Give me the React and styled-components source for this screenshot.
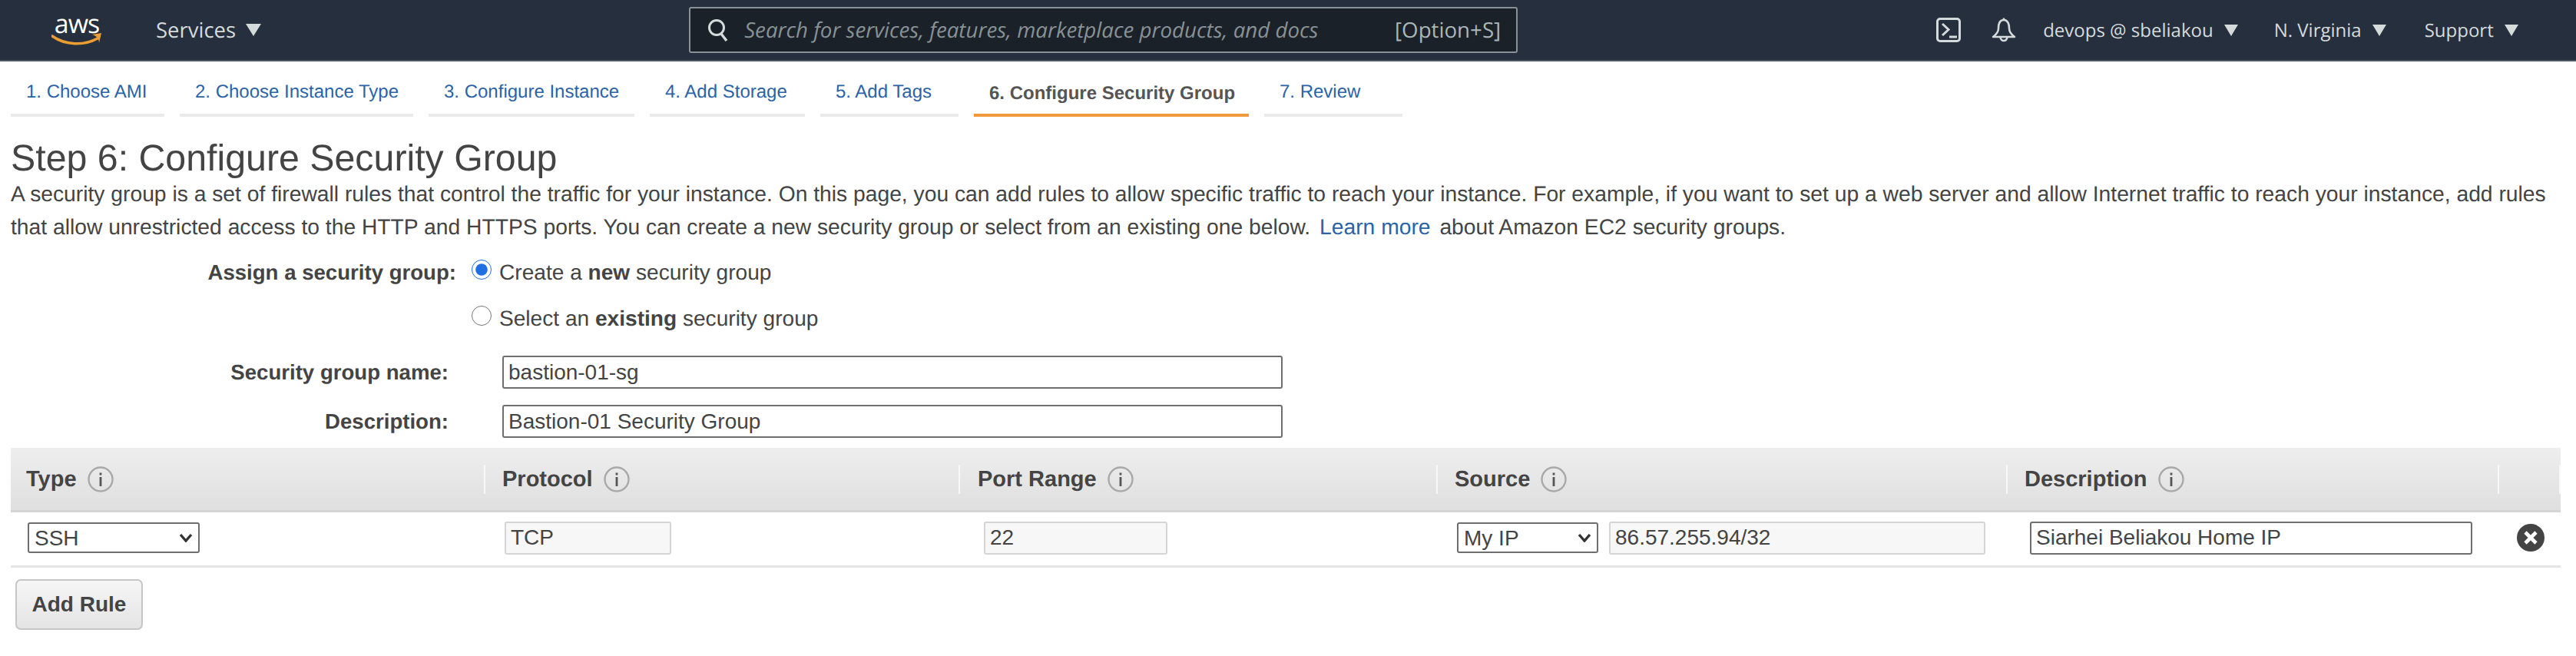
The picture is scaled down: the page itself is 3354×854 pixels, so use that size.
import React from 'react';
import styled, { createGlobalStyle } from 'styled-components';

const GlobalStyle = createGlobalStyle`
  html, body { margin: 0; padding: 0; background: #fff; }
  body { font-family: "Liberation Sans", Arial, sans-serif; color: #444; text-rendering: geometricPrecision; }
  * { box-sizing: border-box; }
`;

//top navigation
const NavBar = styled.header`
  height: 80px;
  background: #252f3e;
  border-bottom: 2px solid #4b545f;
  display: flex;
  align-items: center;
  font-family: "Open Sans", sans-serif;
  color: #d5dbdb;
  padding-left: 67px;
`;
const Logo = styled.div`
  width: 66px;
  height: 46px;
  display: flex;
  flex-direction: column;
  align-items: center;
`;
const LogoWord = styled.span`
  font-size: 34px;
  line-height: 28px;
  height: 26px;
  color: #fff;
  letter-spacing: -1px;
`;
const NavMenu = styled.div`
  display: flex;
  align-items: center;
  gap: ${p => p.$gap || 14}px;
  font-size: ${p => p.$size || 24}px;
  margin-left: ${p => p.$left || 0}px;
  white-space: nowrap;
`;
const Caret = styled.span`
  width: 0;
  height: 0;
  border-left: ${p => p.$w || 9}px solid transparent;
  border-right: ${p => p.$w || 9}px solid transparent;
  border-top: ${p => p.$h || 15}px solid #d5dbdb;
`;
const SearchBox = styled.div`
  width: 1079px;
  height: 60px;
  margin-left: 557px;
  background: #1b2128;
  border: 2px solid #879196;
  border-radius: 3px;
  display: flex;
  align-items: center;
  padding: 0 20px 0 22px;
  color: #879196;
  font-size: 27.7px;
  white-space: nowrap;
`;
const SearchHint = styled.span`
  font-style: italic;
  margin-left: 20px;
  flex: 1;
`;
const SearchKey = styled.span`
  color: #aab7b8;
`;
const NavIcon = styled.svg`
  display: block;
  margin-left: ${p => p.$left}px;
  flex: none;
`;

//wizard steps
const Steps = styled.nav`
  display: flex;
  gap: 20px;
  padding-left: 14px;
  height: 72px;
`;
const Step = styled.a`
  width: ${p => p.$w}px;
  border-bottom: 4px solid ${p => (p.$active ? '#f0983a' : '#eaeaea')};
  color: ${p => (p.$active ? '#555' : '#2a63a8')};
  font-weight: ${p => (p.$active ? 700 : 400)};
  font-size: 24px;
  line-height: 28px;
  padding: ${p => (p.$active ? 28 : 26)}px 0 0 20px;
  white-space: nowrap;
`;

const Main = styled.main`
  padding: 0 20px 0 14px;
`;
const Title = styled.h1`
  margin: 26px 0 0;
  font-size: 48.3px;
  line-height: 56px;
  font-weight: 400;
  color: #444;
`;
const Intro = styled.p`
  margin: -3px 0 0;
  font-size: 28.25px;
  line-height: 43px;
  color: #444;
`;
const LearnMore = styled.a`
  color: #2a63a8;
  margin: 0 4px;
`;

//form
const FormRow = styled.div`
  display: flex;
  align-items: ${p => p.$align || 'center'};
  margin-top: ${p => p.$top}px;
`;
const FieldLabel = styled.label`
  width: ${p => p.$w}px;
  text-align: right;
  font-size: 27.6px;
  font-weight: 700;
  line-height: 33px;
  color: #444;
  flex: none;
`;
const RadioGroup = styled.div`
  display: flex;
  flex-direction: column;
  gap: 27px;
  margin-left: 20px;
`;
const RadioLine = styled.label`
  display: flex;
  align-items: flex-start;
  font-size: 28.1px;
  line-height: 33px;
  color: #444;
  white-space: nowrap;
`;
const Radio = styled.input.attrs({ type: 'radio' })`
  width: 26px;
  height: 26px;
  margin: 0 10px 0 0;
  accent-color: #1f6fe0;
`;
const TextInput = styled.input.attrs({ type: 'text' })`
  width: ${p => p.$w}px;
  height: 43px;
  margin-left: ${p => p.$left || 0}px;
  border: 2px solid ${p => (p.$disabled ? '#d5d5d5' : '#6e6e6e')};
  border-radius: 3px;
  background: ${p => (p.$disabled ? '#f7f7f7' : '#fff')};
  font-family: inherit;
  font-size: 28px;
  color: #444;
  padding: 0 6px;
  outline: none;
  flex: none;
`;

//rules table
const RuleTable = styled.div`
  margin-top: 13px;
`;
const columns = '618px 618px 622px 742px 640px 80px';
const HeadRow = styled.div`
  display: grid;
  grid-template-columns: ${columns};
  height: 84px;
  padding-top: 22px;
  background: linear-gradient(#eeeeee, #dfdfdf);
  border-bottom: 3px solid #d5d5d5;
`;
const HeadCell = styled.div`
  height: 38px;
  display: flex;
  align-items: center;
  gap: 14px;
  padding-left: ${p => p.$pad}px;
  border-right: 2px solid #f8f8f8;
  font-size: 29px;
  font-weight: 700;
  color: #444;
`;
const BodyRow = styled.div`
  display: grid;
  grid-template-columns: ${columns};
  height: 72px;
  align-items: center;
  border-bottom: 3px solid #e5e5e5;
  padding-bottom: 3px;
`;
const BodyCell = styled.div`
  display: flex;
  align-items: center;
  gap: 14px;
  padding-left: ${p => p.$pad}px;
`;
const chevron = "url(\"data:image/svg+xml,%3Csvg xmlns='http://www.w3.org/2000/svg' viewBox='0 0 18 12'%3E%3Cpath d='M2 2 L9 10 L16 2' fill='none' stroke='%23333' stroke-width='3.4'/%3E%3C/svg%3E\")";
const Select = styled.select`
  appearance: none;
  width: ${p => p.$w}px;
  height: 40px;
  border: 2px solid #6e6e6e;
  border-radius: 3px;
  background: #fff ${chevron} no-repeat right 7px center / 18px 12px;
  font-family: inherit;
  font-size: 28px;
  color: #444;
  padding-left: 7px;
  flex: none;
`;
const AddRule = styled.button`
  display: block;
  width: 166px;
  height: 66px;
  margin: 15px 0 0 6px;
  border: 2px solid #c6c6c6;
  border-radius: 7px;
  background: linear-gradient(#f6f6f6, #e4e4e4);
  font-family: inherit;
  font-size: 28px;
  font-weight: 700;
  color: #444;
`;

const InfoIcon = () => (
  <svg width="34" height="34" viewBox="0 0 34 34">
    <circle cx="17" cy="17" r="15.5" fill="none" stroke="#a9a9a9" strokeWidth="2.4" />
    <rect x="15.6" y="14" width="2.8" height="12" fill="#555" />
    <rect x="15.6" y="8.5" width="2.8" height="3" fill="#555" />
  </svg>
);

const headers = [
  ['Type', 20],
  ['Protocol', 22],
  ['Port Range', 23],
  ['Source', 22],
  ['Description', 22],
];

const steps = [
  ['1. Choose AMI', 200],
  ['2. Choose Instance Type', 304],
  ['3. Configure Instance', 268],
  ['4. Add Storage', 202],
  ['5. Add Tags', 180],
  ['6. Configure Security Group', 358, true],
  ['7. Review', 180],
];

class App extends React.Component {
  render() {
    return (
      <>
        <GlobalStyle />
        <NavBar>
          <Logo>
            <LogoWord>aws</LogoWord>
            <svg width="66" height="20" viewBox="0 0 66 20">
              <path d="M1 5 C18 17 42 18 60 8" fill="none" stroke="#ec9d32" strokeWidth="3.6" strokeLinecap="round" />
              <path d="M53 3 L65 1 L62 14 C62 9 59 5 53 3 Z" fill="#ec9d32" />
            </svg>
          </Logo>
          <NavMenu $size={27.5} $gap={13} $left={70}>
            Services <Caret $w={10} $h={16} />
          </NavMenu>
          <SearchBox>
            <svg width="28" height="30" viewBox="0 0 28 30">
              <circle cx="12" cy="12" r="9.5" fill="none" stroke="#d5dbdb" strokeWidth="3" />
              <path d="M18 20 L25 29" stroke="#d5dbdb" strokeWidth="3.4" />
            </svg>
            <SearchHint>Search for services, features, marketplace products, and docs</SearchHint>
            <SearchKey>[Option+S]</SearchKey>
          </SearchBox>
          <NavIcon $left={545} width="32" height="32" viewBox="0 0 32 32">
            <rect x="1.5" y="1.5" width="29" height="29" rx="3.5" fill="none" stroke="#d5dbdb" strokeWidth="3" />
            <path d="M8 8 L16 15.5 L8 23" fill="none" stroke="#d5dbdb" strokeWidth="3" />
            <path d="M17 25 H27" stroke="#d5dbdb" strokeWidth="3" />
          </NavIcon>
          <NavIcon $left={40} width="32" height="32" viewBox="0 0 32 32">
            <path
              d="M16 3 C10.5 3 9 9 9 14 C9 19 6 22 2 25 H30 C26 22 23 19 23 14 C23 9 21.5 3 16 3 Z"
              fill="none"
              stroke="#d5dbdb"
              strokeWidth="2.6"
              strokeLinejoin="round"
            />
            <path d="M16 0.5 V3" stroke="#d5dbdb" strokeWidth="2.6" />
            <path d="M11.5 25 A4.5 5 0 0 0 20.5 25" fill="none" stroke="#d5dbdb" strokeWidth="2.6" />
          </NavIcon>
          <NavMenu $left={35}>
            devops @ sbeliakou <Caret />
          </NavMenu>
          <NavMenu $left={47}>
            N. Virginia <Caret />
          </NavMenu>
          <NavMenu $left={50}>
            Support <Caret />
          </NavMenu>
        </NavBar>

        <Steps>
          {steps.map(([label, w, active]) => (
            <Step key={label} $w={w} $active={active}>
              {label}
            </Step>
          ))}
        </Steps>

        <Main>
          <Title>Step 6: Configure Security Group</Title>
          <Intro>
            A security group is a set of firewall rules that control the traffic for your instance. On this page, you can add rules to allow specific traffic to reach your instance. For example, if you want to set up a web server and allow Internet traffic to reach your instance, add rules<br />
            that allow unrestricted access to the HTTP and HTTPS ports. You can create a new security group or select from an existing one below.{' '}
            <LearnMore>Learn more</LearnMore>{' '}
            about Amazon EC2 security groups.
          </Intro>

          <FormRow $align="flex-start" $top={21}>
            <FieldLabel $w={580}>Assign a security group:</FieldLabel>
            <RadioGroup>
              <RadioLine>
                <Radio name="sg" defaultChecked />
                <span>
                  Create a <b>new</b> security group
                </span>
              </RadioLine>
              <RadioLine>
                <Radio name="sg" />
                <span>
                  Select an <b>existing</b> security group
                </span>
              </RadioLine>
            </RadioGroup>
          </FormRow>

          <FormRow $top={32}>
            <FieldLabel $w={570}>Security group name:</FieldLabel>
            <TextInput $w={1016} $left={70} defaultValue="bastion-01-sg" />
          </FormRow>
          <FormRow $top={21}>
            <FieldLabel $w={570}>Description:</FieldLabel>
            <TextInput $w={1016} $left={70} defaultValue="Bastion-01 Security Group" />
          </FormRow>

          <RuleTable>
            <HeadRow>
              {headers.map(([label, pad]) => (
                <HeadCell key={label} $pad={pad}>
                  {label} <InfoIcon />
                </HeadCell>
              ))}
              <HeadCell $pad={0} />
            </HeadRow>
            <BodyRow>
              <BodyCell $pad={22}>
                <Select $w={224} defaultValue="SSH">
                  <option>SSH</option>
                </Select>
              </BodyCell>
              <BodyCell $pad={25}>
                <TextInput $w={217} $disabled readOnly defaultValue="TCP" />
              </BodyCell>
              <BodyCell $pad={31}>
                <TextInput $w={239} $disabled readOnly defaultValue="22" />
              </BodyCell>
              <BodyCell $pad={25}>
                <Select $w={184} defaultValue="My IP">
                  <option>My IP</option>
                </Select>
                <TextInput $w={490} $disabled readOnly defaultValue="86.57.255.94/32" />
              </BodyCell>
              <BodyCell $pad={29}>
                <TextInput $w={576} defaultValue="Siarhei Beliakou Home IP" />
              </BodyCell>
              <BodyCell $pad={23}>
                <svg width="36" height="36" viewBox="0 0 36 36">
                  <circle cx="18" cy="18" r="18" fill="#444" />
                  <path d="M11 11 L25 25 M25 11 L11 25" stroke="#fff" strokeWidth="4.6" />
                </svg>
              </BodyCell>
            </BodyRow>
            <AddRule>Add Rule</AddRule>
          </RuleTable>
        </Main>
      </>
    );
  }
}

export default App;
